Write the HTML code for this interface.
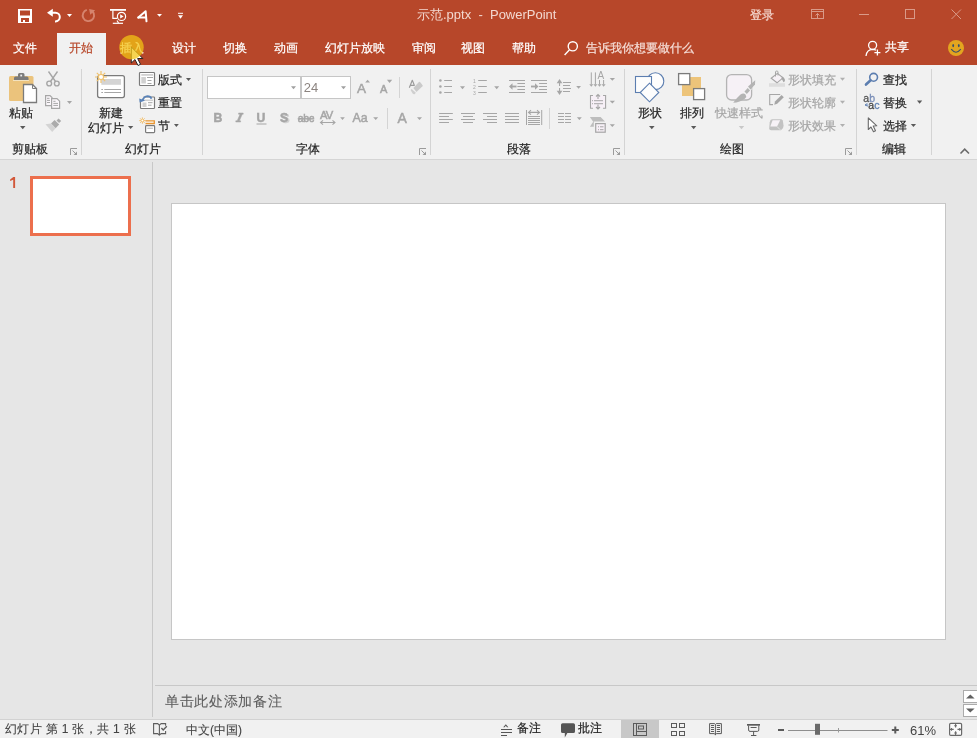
<!DOCTYPE html>
<html><head><meta charset="utf-8">
<style>
html,body{margin:0;padding:0;width:977px;height:738px;overflow:hidden;background:#E6E6E6;font-family:"Liberation Sans",sans-serif;}
.a{position:absolute;white-space:pre;font-size:12px;line-height:12px;-webkit-text-stroke-width:0.22px;will-change:transform;}
#bar{position:absolute;left:0;top:0;width:977px;height:65px;background:#B7472A;}
#tab{position:absolute;left:57px;top:33px;width:49px;height:32px;background:#F1F1F1;}
#rib{position:absolute;left:0;top:65px;width:977px;height:94px;background:#F1F1F1;border-bottom:1px solid #D5D5D5;}
#stat{position:absolute;left:0;top:719px;width:977px;height:19px;background:#F1F1F1;border-top:1px solid #D2D2D2;}
.w{color:#FFFFFF;}
.k{color:#262626;}
.g{color:#A6A6A6;}
.s{color:#444444;}
#ov{position:absolute;left:0;top:0;will-change:transform;}
</style></head><body>
<div id="bar"></div>
<div id="tab"></div>
<div id="rib"></div>
<div id="stat"></div>

<!-- title -->
<div class="a" style="left:417px;top:8px;font-size:13px;line-height:13px;color:#F3D8D0;-webkit-text-stroke-width:0;">示范.pptx  -  PowerPoint</div>
<div class="a" style="left:750px;top:9px;color:#F2D3CA;">登录</div>

<!-- tabs -->
<div class="a w" style="left:13px;top:42px;">文件</div>
<div class="a" style="left:69px;top:42px;color:#B7472A;">开始</div>
<div class="a" style="left:120px;top:42px;color:#FFFFFF;">插入</div>
<div class="a w" style="left:172px;top:42px;">设计</div>
<div class="a w" style="left:223px;top:42px;">切换</div>
<div class="a w" style="left:274px;top:42px;">动画</div>
<div class="a w" style="left:325px;top:42px;">幻灯片放映</div>
<div class="a w" style="left:412px;top:42px;">审阅</div>
<div class="a w" style="left:461px;top:42px;">视图</div>
<div class="a w" style="left:512px;top:42px;">帮助</div>
<div class="a" style="left:586px;top:42px;color:#F4DCD5;">告诉我你想要做什么</div>
<div class="a w" style="left:885px;top:41px;">共享</div>

<!-- ribbon text: clipboard -->
<div class="a k" style="left:9px;top:107px;">粘贴</div>
<div class="a k" style="left:12px;top:143px;">剪贴板</div>
<!-- slides -->
<div class="a k" style="left:99px;top:107px;">新建</div>
<div class="a k" style="left:88px;top:122px;">幻灯片</div>
<div class="a k" style="left:158px;top:74px;">版式</div>
<div class="a k" style="left:158px;top:97px;">重置</div>
<div class="a k" style="left:158px;top:120px;">节</div>
<div class="a k" style="left:125px;top:143px;">幻灯片</div>
<!-- font -->
<div class="a k" style="left:296px;top:143px;">字体</div>
<!-- paragraph -->
<div class="a k" style="left:507px;top:143px;">段落</div>
<!-- drawing -->
<div class="a k" style="left:638px;top:107px;">形状</div>
<div class="a k" style="left:680px;top:107px;">排列</div>
<div class="a g" style="left:715px;top:107px;">快速样式</div>
<div class="a g" style="left:788px;top:74px;">形状填充</div>
<div class="a g" style="left:788px;top:97px;">形状轮廓</div>
<div class="a g" style="left:788px;top:120px;">形状效果</div>
<div class="a k" style="left:720px;top:143px;">绘图</div>
<!-- editing -->
<div class="a k" style="left:883px;top:74px;">查找</div>
<div class="a k" style="left:883px;top:97px;">替换</div>
<div class="a k" style="left:883px;top:120px;">选择</div>
<div class="a k" style="left:882px;top:143px;">编辑</div>

<!-- main -->
<div style="position:absolute;left:152px;top:162px;width:1px;height:555px;background:#C8C8C8;"></div>
<div style="position:absolute;left:30px;top:176px;width:95px;height:54px;border:3px solid #EC6F4D;background:#fff;"></div>
<div style="position:absolute;left:171px;top:203px;width:773px;height:435px;border:1px solid #C6C6C6;background:#fff;"></div>
<div style="position:absolute;left:155px;top:685px;width:822px;height:1px;background:#C8C8C8;"></div>
<div class="a" style="left:164.5px;top:694px;font-size:14.4px;letter-spacing:0.65px;line-height:15px;color:#5E5E5E;-webkit-text-stroke-width:0.1px;">单击此处添加备注</div>

<!-- status -->
<div class="a s" style="left:4.5px;top:723px;letter-spacing:0.33px;-webkit-text-stroke-width:0.1px;">幻灯片 第 1 张，共 1 张</div>
<div class="a s" style="left:185.5px;top:724px;-webkit-text-stroke-width:0.1px;">中文(中国)</div>
<div class="a" style="left:517px;top:722px;color:#262626;">备注</div>
<div class="a" style="left:578px;top:722px;color:#262626;">批注</div>
<div style="position:absolute;left:621px;top:720px;width:38px;height:18px;background:#C8C8C8;"></div>
<div class="a s" style="left:910px;top:724px;font-size:13px;line-height:13px;-webkit-text-stroke-width:0;">61%</div>

<svg id="ov" width="977" height="738" viewBox="0 0 977 738">
<!-- ===== QAT ===== -->
<g fill="#fff">
 <rect x="18" y="9" width="14" height="14"/>
 <rect x="20" y="10.5" width="10" height="5" fill="#B7472A"/>
 <rect x="21" y="18" width="8" height="4" fill="#B7472A"/>
 <rect x="23" y="20" width="2" height="2"/>
</g>
<g fill="none" stroke="#fff" stroke-width="2">
 <path d="M51.5 12.8 H55.5 A4.3 4.3 0 0 1 55.5 21.4 H55"/>
</g>
<path d="M47 12.8 L52.8 8.8 V16.8 Z" fill="#fff"/>
<path d="M67 14 H72 L69.5 17 Z" fill="#fff"/>
<path d="M86.8 9.9 A5.7 5.7 0 1 0 92.6 11.5" fill="none" stroke="#D6846E" stroke-width="1.9"/>
<path d="M89.1 9.1 L95.1 10.2 L90.3 14.8 Z" fill="#D6846E"/>
<!-- presenter -->
<g fill="none" stroke="#fff" stroke-width="1.8">
 <path d="M110 9.9 H126"/>
</g>
<g fill="none" stroke="#fff" stroke-width="1.2">
 <path d="M112.9 10.5 V18.4 H117"/>
 <circle cx="121.5" cy="16.4" r="4.1"/>
 <path d="M112.8 23.3 H123"/>
</g>
<path d="M120.2 14.2 L123.6 16.4 L120.2 18.6 Z" fill="#fff"/>
<path d="M117 20.5 L118.5 23" stroke="#fff" stroke-width="1.2"/>
<!-- A italic -->
<g fill="none" stroke="#fff" stroke-width="2" stroke-linejoin="round" stroke-linecap="round">
 <path d="M138.3 17.6 L145.6 11.2 L146.5 21.3"/>
 <path d="M138.3 17.6 H145.8"/>
</g>
<path d="M157 14 H162 L159.5 16.8 Z" fill="#fff"/>
<rect x="178" y="12.8" width="5" height="1" fill="#fff"/>
<path d="M178 15.3 H183 L180.5 18.8 Z" fill="#fff"/>
<!-- window controls -->
<g fill="none" stroke="#D99A88" stroke-width="1">
 <rect x="811.5" y="9.5" width="12" height="9"/>
 <path d="M811.5 11.5 H823.5"/>
 <path d="M817.5 18 V13.5 M815.5 15.5 L817.5 13.5 L819.5 15.5"/>
 <path d="M859 14.5 H869"/>
 <rect x="905.5" y="9.5" width="9" height="9"/>
 <path d="M951.5 9.5 L961 19 M961 9.5 L951.5 19"/>
</g>
<!-- search -->
<g fill="none" stroke="#fff" stroke-width="1.4">
 <circle cx="572.8" cy="46.3" r="4.6"/>
 <path d="M569.5 49.8 L564.6 55"/>
</g>
<!-- user -->
<g fill="none" stroke="#fff" stroke-width="1.3">
 <circle cx="872.6" cy="45.3" r="4"/>
 <path d="M866 56 C866.5 51.5 869 49.5 872.6 49.4 C874 49.4 875 49.7 876 50.2"/>
 <path d="M877.4 49.6 V55.6 M874.4 52.6 H880.4"/>
</g>
<!-- smiley -->
<circle cx="956" cy="48" r="8" fill="#E3A51F"/>
<ellipse cx="953.2" cy="45.6" rx="0.9" ry="1.7" fill="#3A4E6A"/>
<ellipse cx="958.8" cy="45.6" rx="0.9" ry="1.7" fill="#3A4E6A"/>
<path d="M951.2 49.2 Q956 55.2 960.8 49.2" fill="none" stroke="#3A4E6A" stroke-width="1.1"/>
<!-- highlight circle + cursor -->


<!-- cursor -->
<path d="M131.3 47 V63 L135 59.5 L138 65.5 L140.5 64.3 L137.6 58.5 L142.8 58.5 Z" fill="#FFFFFF" stroke="#1A1A1A" stroke-width="0.9" stroke-linejoin="miter"/>
<circle cx="131.5" cy="47.2" r="12.2" fill="rgb(243,195,20)" fill-opacity="0.74"/>

<!-- ===== Clipboard group ===== -->
<rect x="9" y="76" width="24.5" height="25" rx="1.5" fill="#EBC37C"/>
<path d="M14 80 V78 Q14 76.5 15.5 76.5 H18 V74.5 Q18 73 19.5 73 H23 Q24.5 73 24.5 74.5 V76.5 H27 Q28.5 76.5 28.5 78 V80 Z" fill="#7B7B7B"/>
<rect x="20.3" y="74.6" width="1.8" height="1.8" fill="#F2F2F2"/>
<rect x="13" y="80" width="16" height="1" fill="#F2E2C0"/>
<path d="M23.5 84.5 H32.5 L36.5 88.5 V102.5 H23.5 Z" fill="#FFFFFF" stroke="#7B7B7B" stroke-width="1.3"/>
<path d="M32.5 84.5 V88.5 H36.5" fill="none" stroke="#7B7B7B" stroke-width="1"/>
<path d="M20 126 H25.5 L22.75 129.2 Z" fill="#5A5A5A"/>
<!-- scissors -->
<g fill="none" stroke="#A6A6A6" stroke-width="1.4">
 <path d="M48.5 71.5 L55.5 81.5 M57.5 71.5 L50.5 81.5"/>
 <circle cx="49.2" cy="83.5" r="2.4"/>
 <circle cx="56.8" cy="83.5" r="2.4"/>
</g>
<!-- copy -->
<g stroke="#A6A6A6" stroke-width="1.2" fill="#FBF7FB">
 <path d="M45.6 95.6 H50 L52 97.6 V105.6 H45.6 Z"/>
 <path d="M51.6 98.6 H57 L59.6 101.2 V108.4 H51.6 Z"/>
</g>
<g stroke="#A6A6A6" stroke-width="1">
 <path d="M47 98.3 H49.5 M47 100.4 H50 M47 102.5 H50"/>
 <path d="M53.3 101.3 H55.5 M53.3 103.4 H58 M53.3 105.4 H58"/>
</g>
<path d="M67 101 H72 L69.5 104 Z" fill="#A6A6A6"/>
<!-- format painter -->
<path d="M56.5 120.5 L58.6 118.4 L61.2 121 L59.1 123.1 Z" fill="#ABABAB"/>
<path d="M51 123.6 L54.6 120 L59.2 124.6 L55.6 128.2 Z" fill="#ABABAB"/>
<path d="M45.5 124.3 L51 123.6 L55.6 128.2 L52.2 132 Z" fill="#D4D4D4"/>
<!-- launcher -->
<g fill="none" stroke="#9B9B9B" stroke-width="1">
 <path d="M70.5 155 V148.5 H77"/>
 <path d="M72.5 150.5 L76 154"/>
</g>
<path d="M73.5 155 H77 V151.5 Z" fill="#9B9B9B"/>

<!-- separators -->
<g fill="#D4D4D4">
 <rect x="81" y="69" width="1" height="86"/>
 <rect x="202" y="69" width="1" height="86"/>
 <rect x="430" y="69" width="1" height="86"/>
 <rect x="624" y="69" width="1" height="86"/>
 <rect x="856" y="69" width="1" height="86"/>
 <rect x="931" y="69" width="1" height="86"/>
 <rect x="399" y="77" width="1" height="21"/>
 <rect x="387" y="108" width="1" height="21"/>
 <rect x="549" y="108" width="1" height="21"/>
</g>

<!-- ===== Slides group ===== -->
<rect x="97.6" y="75.6" width="26.8" height="22" rx="2" fill="#FFFFFF" stroke="#7B7B7B" stroke-width="1.3"/>
<rect x="101.3" y="79" width="19.7" height="5.8" fill="#D4D4D4"/>
<g stroke="#A6A6A6" stroke-width="1">
 <path d="M101.3 89.5 H103 M104.3 89.5 H121 M101.3 92.5 H103 M104.3 92.5 H121"/>
</g>
<g stroke="#F0C26C" stroke-width="1.2">
 <path d="M101 71 V83 M95 77 H107 M96.8 72.8 L105.2 81.2 M105.2 72.8 L96.8 81.2"/>
</g>
<circle cx="101" cy="77" r="3" fill="#F0C26C"/>
<circle cx="101" cy="77" r="2" fill="#FFFFFF"/>
<path d="M128 126 H133.3 L130.65 129 Z" fill="#5A5A5A"/>
<!-- layout -->
<rect x="139.5" y="72.5" width="15" height="13" rx="0.8" fill="#FFFFFF" stroke="#7B7B7B" stroke-width="1.2"/>
<rect x="141.3" y="74" width="11.7" height="1.8" fill="#D0D0D0"/>
<rect x="141.3" y="77" width="4.6" height="6.5" fill="#D0D0D0"/>
<g stroke="#A6A6A6" stroke-width="1"><path d="M147 77.5 H153 M147.5 80.5 H151.5 M147.5 83.5 H151.5"/></g>
<path d="M186 78 H191 L188.5 81 Z" fill="#5A5A5A"/>
<!-- reset -->
<rect x="140.5" y="97" width="14" height="11.5" rx="0.8" fill="#FFFFFF" stroke="#7B7B7B" stroke-width="1.2"/>
<rect x="142.5" y="99.5" width="10.5" height="1.6" fill="#D0D0D0"/>
<rect x="142.5" y="102.5" width="4" height="4.5" fill="#D0D0D0"/>
<g stroke="#A6A6A6" stroke-width="1"><path d="M148 102.7 H152.5 M148 105.2 H151.5"/></g>
<path d="M138.5 95.5 H143.5 V101.5 H138.5 Z" fill="#F1F1F1"/>
<path d="M142.2 100.8 Q144 96.3 147.5 96.1 Q150.5 96.1 151.5 98.8" fill="none" stroke="#5A83B8" stroke-width="1.8"/>
<path d="M139.2 98.4 L145.2 100.4 L139.6 102.6 Z" fill="#5A83B8"/>
<!-- section -->
<g stroke="#F2BE6A" stroke-width="0.9"><path d="M142.4 117.4 V123.8 M139.2 120.6 H145.6 M140.1 118.3 L144.7 122.9 M144.7 118.3 L140.1 122.9"/></g>
<circle cx="142.4" cy="120.6" r="1.8" fill="#F2BE6A"/>
<circle cx="142.4" cy="120.6" r="1" fill="#FFF"/>
<path d="M145.5 120.9 H154.3 V123.5 H145.5" fill="#FFFFFF" stroke="#E89530" stroke-width="1.3"/>
<rect x="145.6" y="125.6" width="9" height="7" rx="0.8" fill="#FFFFFF" stroke="#7B7B7B" stroke-width="1.2"/>
<rect x="147.3" y="127.6" width="5.6" height="1.4" fill="#C8C8C8"/>
<path d="M174 124 H178.8 L176.4 127 Z" fill="#5A5A5A"/>

<!-- ===== Font group ===== -->
<rect x="207.5" y="76.5" width="93" height="22" fill="#FFFFFF" stroke="#C6C6C6" stroke-width="1"/>
<rect x="301.5" y="76.5" width="49" height="22" fill="#FFFFFF" stroke="#C6C6C6" stroke-width="1"/>
<rect x="300" y="77" width="2" height="21" fill="#C6C6C6"/>
<path d="M291 86.3 H296 L293.5 89.3 Z" fill="#A0A0A0"/>
<text x="303.8" y="91.8" font-size="13" fill="#8C8480" font-family="Liberation Sans">24</text>
<path d="M341 86.3 H346 L343.5 89.3 Z" fill="#A0A0A0"/>
<g fill="#A6A6A6" stroke="#A6A6A6" stroke-width="0.5" font-family="Liberation Sans">
 <text x="357" y="93" font-size="13.5">A</text>
 <text x="380" y="93" font-size="11">A</text>
</g>
<path d="M365.2 82.6 L367.6 79.8 L370 82.6 Z" fill="#A6A6A6"/>
<path d="M386.9 79.8 H392.2 L389.55 83 Z" fill="#A6A6A6"/>
<!-- clear formatting -->
<path d="M409.3 87.8 L412.3 80.3 L414.5 85.6 M410.3 85.4 H414.5" fill="none" stroke="#9A9A9A" stroke-width="1.15" stroke-linejoin="round"/>
<path d="M413.4 87.9 L418.9 82.1 Q419.5 81.6 420 82.1 L422.6 85.2 Q423 85.8 422.5 86.3 L417 91.6 Q416.5 92 416 91.5 Z" fill="#CACACA"/>
<path d="M410.6 89.9 L411.6 88.9 L415.9 92.8 L414.6 94.2 Q413.6 94.6 412.6 93.6 Z" fill="#CFCFCF"/>
<!-- B I U S -->
<g fill="#A6A6A6" stroke="#A6A6A6" stroke-width="0.5">
 <text x="213.5" y="122" font-size="12.2" font-weight="bold" font-family="Liberation Sans">B</text>
 <path d="M238.6 113 H243.2 V114.3 H242.2 L239.4 120.8 H240.6 V122 H235.8 V120.8 H237.2 L240 114.3 H238.6 Z"/>
 <text x="256.6" y="122" font-size="12.2" font-weight="bold" font-family="Liberation Sans">U</text>
 <rect x="256.5" y="123.5" width="10" height="1" stroke="none"/>
 <text x="281.5" y="123.3" font-size="12.2" font-weight="bold" font-family="Liberation Sans" fill="#CFCFCF" stroke="#CFCFCF">S</text>
 <text x="280" y="122" font-size="12.2" font-weight="bold" font-family="Liberation Sans">S</text>
 <text x="297.8" y="122" font-size="10.5" font-family="Liberation Sans" letter-spacing="-0.3">abc</text>
 <rect x="298" y="118.2" width="16" height="1"/>
 <text x="320" y="119" font-size="11.2" font-family="Liberation Sans" letter-spacing="-0.9">AV</text>
 <text x="352.6" y="122" font-size="12.4" font-family="Liberation Sans">Aa</text>
 <text x="397.4" y="122.8" font-size="14" font-family="Liberation Sans">A</text>
</g>
<g fill="none" stroke="#A6A6A6" stroke-width="1.1">
 <path d="M320.5 122.5 H335 M323 120.3 L320.5 122.5 L323 124.7 M332.5 120.3 L335 122.5 L332.5 124.7"/>
</g>
<g fill="#A6A6A6">
 <path d="M340.2 117.2 H344.8 L342.5 120 Z"/>
 <path d="M373.2 117.2 H378.2 L375.7 120 Z"/>
 <path d="M417 117.2 H422 L419.5 120 Z"/>
</g>
<!-- launcher font -->
<g fill="none" stroke="#9B9B9B" stroke-width="1">
 <path d="M419.5 155 V148.5 H426"/>
 <path d="M421.5 150.5 L425 154"/>
</g>
<path d="M422.5 155 H426 V151.5 Z" fill="#9B9B9B"/>

<!-- ===== Paragraph group ===== -->
<g fill="#A6A6A6">
 <circle cx="440.4" cy="80.5" r="1.3"/><circle cx="440.4" cy="86.5" r="1.3"/><circle cx="440.4" cy="92.5" r="1.3"/>
 <rect x="444.2" y="80" width="7.8" height="1"/><rect x="444.2" y="86" width="7.8" height="1"/><rect x="444.2" y="92" width="7.8" height="1"/>
 <path d="M460 86.2 H465 L462.5 89.2 Z"/>
 <rect x="478.2" y="80" width="8.6" height="1"/><rect x="478.2" y="86" width="8.6" height="1"/><rect x="478.2" y="92" width="8.6" height="1"/>
 <path d="M494.2 86.2 H499.2 L496.7 89.2 Z"/>
</g>
<g fill="#A6A6A6" font-family="Liberation Sans" font-size="5">
 <text x="473" y="83">1</text><text x="473" y="89">2</text><text x="473" y="95">3</text>
</g>
<g fill="#A6A6A6">
 <rect x="509" y="80" width="16" height="1"/><rect x="509" y="92" width="16" height="1"/>
 <rect x="517.4" y="83" width="7.6" height="1"/><rect x="517.4" y="86" width="7.6" height="1"/><rect x="517.4" y="89" width="7.6" height="1"/>
 <rect x="511" y="85.6" width="5.5" height="1.8"/>
 <path d="M509 86.5 L512.5 83.2 V89.8 Z"/>
 <rect x="531" y="80" width="16" height="1"/><rect x="531" y="92" width="16" height="1"/>
 <rect x="539.1" y="83" width="7.9" height="1"/><rect x="539.1" y="86" width="7.9" height="1"/><rect x="539.1" y="89" width="7.9" height="1"/>
 <rect x="531" y="85.6" width="5.5" height="1.8"/>
 <path d="M538.5 86.5 L535 83.2 V89.8 Z"/>
 <!-- line spacing -->
 <rect x="559" y="82" width="1.1" height="4"/><rect x="559" y="88" width="1.1" height="4"/>
 <path d="M559.55 79 L562.4 83.2 H556.7 Z"/><path d="M559.55 95 L562.4 90.8 H556.7 Z"/>
 <rect x="563" y="82" width="8" height="1"/><rect x="563" y="85" width="7" height="1"/><rect x="563" y="88" width="8" height="1"/><rect x="563" y="91" width="7" height="1"/>
 <path d="M576.2 85.9 H581 L578.6 88.8 Z"/>
 <!-- text direction -->
 <rect x="590.8" y="72.4" width="1" height="12"/><rect x="594.9" y="72.4" width="1" height="12"/>
 <rect x="599" y="80" width="1" height="4.5"/><rect x="603.1" y="80" width="1" height="4.5"/>
 <path d="M591.3 86.8 L589.3 84.2 H593.3 Z"/><path d="M595.4 86.8 L593.4 84.2 H597.4 Z"/>
 <path d="M599.5 86.8 L597.5 84.2 H601.5 Z"/><path d="M603.6 86.8 L601.6 84.2 H605.6 Z"/>
 <path d="M609.7 78 H615 L612.35 80.8 Z"/>
 <path d="M609.7 100.8 H615 L612.35 103.6 Z"/>
 <path d="M609.7 124.3 H614.9 L612.3 127 Z"/>
</g>
<text x="597.5" y="79" font-size="10" fill="#A6A6A6" font-family="Liberation Sans">A</text>
<!-- align text -->
<rect x="590.5" y="95.5" width="15" height="12.5" fill="#F7F0F7"/>
<g fill="none" stroke="#A6A6A6" stroke-width="1.1">
 <path d="M593 95.5 H590.5 V108.2 H593 M603 95.5 H605.6 V108.2 H603"/>
 <path d="M598 94.5 V99 M596 96.5 L598 94.5 L600 96.5 M598 104.5 V109 M596 107 L598 109 L600 107"/>
</g>
<g fill="#A6A6A6"><rect x="594" y="100.2" width="9" height="1"/><rect x="594" y="103.2" width="9" height="1"/><rect x="592" y="100.2" width="1" height="1"/><rect x="592" y="103.2" width="1" height="1"/></g>
<!-- align row -->
<g fill="#A6A6A6">
 <rect x="439.1" y="113" width="13.7" height="1"/><rect x="439.1" y="116" width="9.9" height="1"/><rect x="439.1" y="119" width="13.7" height="1"/><rect x="439.1" y="122" width="9.9" height="1"/>
 <rect x="461" y="113" width="14" height="1"/><rect x="463" y="116" width="10" height="1"/><rect x="461" y="119" width="14" height="1"/><rect x="463" y="122" width="10" height="1"/>
 <rect x="483" y="113" width="14" height="1"/><rect x="487" y="116" width="10" height="1"/><rect x="483" y="119" width="14" height="1"/><rect x="487" y="122" width="10" height="1"/>
 <rect x="505" y="113" width="14" height="1"/><rect x="505" y="116" width="14" height="1"/><rect x="505" y="119" width="14" height="1"/><rect x="505" y="122" width="14" height="1"/>
 <rect x="526" y="110" width="1" height="15"/><rect x="541.2" y="110" width="1" height="15"/>
 <rect x="528" y="116" width="12" height="1"/><rect x="528" y="118" width="12" height="1"/><rect x="528" y="120" width="12" height="1"/><rect x="528" y="122" width="12" height="1"/><rect x="528" y="124" width="12" height="1"/>
 <rect x="558" y="113" width="6" height="1"/><rect x="558" y="116" width="6" height="1"/><rect x="558" y="119" width="6" height="1"/><rect x="558" y="122" width="6" height="1"/>
 <rect x="565" y="113" width="6" height="1"/><rect x="565" y="116" width="6" height="1"/><rect x="565" y="119" width="6" height="1"/><rect x="565" y="122" width="6" height="1"/>
 <path d="M576.9 117.2 H581.8 L579.35 120 Z"/>
</g>
<g fill="none" stroke="#A6A6A6" stroke-width="1.1">
 <path d="M528.5 112.4 H539.5 M531 110.2 L528.5 112.4 L531 114.6 M537 110.2 L539.5 112.4 L537 114.6"/>
</g>
<!-- smartart -->
<path d="M589.9 117 H600.6 L605 121.6 H593.8 V126.8 H589.9 L593.2 121.8 Z" fill="#BDBDBD"/>
<rect x="595.7" y="123.6" width="9.5" height="8.6" fill="#F7F0F7" stroke="#A6A6A6" stroke-width="1.2"/>
<g fill="#A6A6A6"><rect x="598" y="126.3" width="1" height="1"/><rect x="600" y="126.3" width="3.5" height="1"/><rect x="598" y="129.2" width="1" height="1"/><rect x="600" y="129.2" width="3.5" height="1"/></g>
<!-- launcher para -->
<g fill="none" stroke="#9B9B9B" stroke-width="1">
 <path d="M613.5 155 V148.5 H620"/>
 <path d="M615.5 150.5 L619 154"/>
</g>
<path d="M616.5 155 H620 V151.5 Z" fill="#9B9B9B"/>

<!-- ===== Drawing group ===== -->
<circle cx="655.4" cy="81.2" r="8.4" fill="#FDFDFD" stroke="#5C7EB0" stroke-width="1.1"/>
<rect x="635.5" y="76.5" width="16" height="16" fill="#FDFDFD" stroke="#5C7EB0" stroke-width="1.1"/>
<path d="M649.5 83.2 L658.8 92.5 L649.5 101.8 L640.2 92.5 Z" fill="#FDFDFD" stroke="#5C7EB0" stroke-width="1.1"/>
<path d="M649 125.9 H654.6 L651.8 129.2 Z" fill="#5A5A5A"/>
<!-- arrange -->
<rect x="682" y="77" width="19" height="19" fill="#EDC47A"/>
<rect x="678.6" y="73.6" width="11.2" height="11" fill="#FFFFFF" stroke="#7B7B7B" stroke-width="1.3"/>
<rect x="693.6" y="88.6" width="11" height="11" fill="#FFFFFF" stroke="#7B7B7B" stroke-width="1.3"/>
<path d="M691 125.9 H696.3 L693.65 129.2 Z" fill="#5A5A5A"/>
<!-- quick styles -->
<rect x="726.6" y="74.6" width="25" height="25.4" rx="5" fill="#F6F1F6" stroke="#B4B4B4" stroke-width="1.3"/>
<path d="M743 92 L749 86 L752 89 L746.5 95 Z" fill="#F2F2F2"/>
<path d="M748 86.5 L755.2 80.2 L755 84.5 L750.5 89.5 Z" fill="#B4B4B4"/>
<path d="M744.5 91.5 L747.7 88 L750 90.5 L746.8 94 Z" fill="#B4B4B4"/>
<path d="M733.2 102.8 Q737 97.5 740.5 94.5 Q743.5 92.5 745.5 94.5 Q747 96.5 745 98.5 Q740 102.5 733.2 102.8 Z" fill="#B4B4B4"/>
<path d="M738.8 125.9 H744.2 L741.5 129.2 Z" fill="#C8C8C8"/>
<!-- shape fill -->
<rect x="769" y="83.2" width="16" height="3.6" fill="#DEDEDE"/>
<path d="M771.2 78.3 L777.4 73.4 L783 77.8 L777 82.8 Z" fill="#F6F1F6" stroke="#A6A6A6" stroke-width="1.1"/>
<path d="M775.5 76.5 V72 Q775.5 71 776.8 71 Q778 71 778 72 V75.5" fill="none" stroke="#A6A6A6" stroke-width="1"/>
<path d="M782 76.5 Q785 78 785 80 Q785 82 783.5 82.2 Q782.5 80 781.5 78.5 Z" fill="#A6A6A6"/>
<path d="M840 77.7 H845 L842.5 80.8 Z" fill="#B0B0B0"/>
<!-- shape outline -->
<path d="M780.2 94.5 H769.7 V104.6 H773" fill="none" stroke="#A6A6A6" stroke-width="1.1"/>
<path d="M774.3 104.7 L775 101.6 L781.6 95 L783.8 97.2 L777.2 103.8 Z" fill="#A6A6A6"/>
<path d="M840 100.7 H845 L842.5 103.8 Z" fill="#B0B0B0"/>
<!-- shape effects -->
<path d="M772 119.2 H780.6 Q782 119.2 782.8 120.6 L783.5 125.2 Q783.7 127 782.6 128.4 L781 130.2 H771.2 Q769.1 130.2 769.2 128.2 L769.7 122.2 Q770.2 119.2 772 119.2 Z" fill="#C2C2C2"/>
<path d="M772.6 120.3 H780.2 L777.1 126.5 H770.3 Z" fill="#F7F2F7"/>
<path d="M777.1 126.6 L780.3 129.8" stroke="#EDEDED" stroke-width="0.8"/>
<path d="M840 124 H845 L842.5 127 Z" fill="#B0B0B0"/>
<!-- launcher drawing -->
<g fill="none" stroke="#9B9B9B" stroke-width="1">
 <path d="M845.5 155 V148.5 H852"/>
 <path d="M847.5 150.5 L851 154"/>
</g>
<path d="M848.5 155 H852 V151.5 Z" fill="#9B9B9B"/>

<!-- ===== Editing ===== -->
<circle cx="873.6" cy="77.3" r="3.9" fill="none" stroke="#5C7EB0" stroke-width="1.6"/>
<path d="M870.6 80.3 L866 84.5" stroke="#5C7EB0" stroke-width="2.6" stroke-linecap="round"/>
<g font-family="Liberation Sans" font-size="10.5">
 <text x="863.3" y="101.8" fill="#555555" stroke="#555555" stroke-width="0.3">a</text>
 <text x="869.2" y="101.8" fill="#7B8FB8" stroke="#7B8FB8" stroke-width="0.3">b</text>
 <text x="868.2" y="108.8" fill="#444444" stroke="#444444" stroke-width="0.3">a</text>
 <text x="874.2" y="108.8" fill="#5C7EB0" stroke="#5C7EB0" stroke-width="0.3">c</text>
</g>
<path d="M867.5 103.3 L865 105 L867.8 106.2 M865.2 105 H868.5" fill="none" stroke="#5C7EB0" stroke-width="0.9"/>
<path d="M917 100.6 H922.2 L919.6 103.8 Z" fill="#5A5A5A"/>
<path d="M868.3 117.8 V129.5 L871 127 L873.5 131.8 L875.5 130.8 L873.2 126 L876.8 125.8 Z" fill="#FFFFFF" stroke="#6A6A6A" stroke-width="1.1" stroke-linejoin="round"/>
<path d="M910.8 124 H916.1 L913.45 127.1 Z" fill="#5A5A5A"/>
<path d="M960.5 153.5 L964.7 149.2 L969 153.5" fill="none" stroke="#6A6A6A" stroke-width="1.6"/>

<!-- ===== Main area ===== -->
<g fill="#FFFFFF" stroke="#ABABAB" stroke-width="1">
 <rect x="963.5" y="690.5" width="14" height="12"/>
 <rect x="963.5" y="704.5" width="14" height="12"/>
</g>
<path d="M966 698.5 L970.3 694.5 L974.6 698.5 Z" fill="#606060"/>
<path d="M966 708.5 H974.6 L970.3 712.5 Z" fill="#606060"/>

<!-- ===== Status ===== -->
<g fill="none" stroke="#5E5E5E" stroke-width="1.1">
 <path d="M159.4 725 L157.6 723.6 H153.6 V733.6 H157.6 L159.4 735"/>
 <path d="M159.4 725 L161.2 723.6 H165.6 V725.8"/>
 <path d="M165.6 731 V733.6 H161.2 L159.4 735"/>
 <path d="M159.4 725 V735.6"/>
</g>
<path d="M161.4 728 L163.2 730 L166.8 726.2" fill="none" stroke="#5E5E5E" stroke-width="1.4"/>
<g fill="#555555">
 <path d="M503.2 727.2 L505.8 724.2 L508.4 727.2 H507 L505.8 725.8 L504.6 727.2 Z"/>
 <rect x="501" y="729" width="11" height="1"/><rect x="501" y="732" width="11" height="1"/><rect x="501" y="735" width="6" height="1"/>
 <path d="M562.6 723.2 H573.4 Q575 723.2 575 724.8 V731.4 Q575 733 573.4 733 H567.4 L564.8 737.6 V733 H562.6 Q561 733 561 731.4 V724.8 Q561 723.2 562.6 723.2 Z"/>
</g>
<g fill="none" stroke="#5A5A5A" stroke-width="1">
 <rect x="633.5" y="723.5" width="13" height="12"/>
 <path d="M636.5 724 V735 M636.5 731.5 H646"/>
 <rect x="638.5" y="726" width="5" height="3"/>
 <rect x="671.5" y="723.5" width="5" height="4"/><rect x="679.5" y="723.5" width="5" height="4"/>
 <rect x="671.5" y="731.5" width="5" height="4"/><rect x="679.5" y="731.5" width="5" height="4"/>
 <path d="M709.6 723.6 H714.6 L715.4 724.4 L716.2 723.6 H721.4 V733.6 H716.4 L715.4 734.8 L714.4 733.6 H709.6 Z"/>
 <path d="M715.4 724.4 V735.2"/>
 <path d="M711 725.5 H714 M711 727.5 H714 M711 729.5 H714 M711 731.5 H714 M716.8 725.5 H720 M716.8 727.5 H720 M716.8 729.5 H720 M716.8 731.5 H720"/>
 <path d="M748.6 725.5 V730 Q748.6 731.4 750 731.4 H757.4 Q758.8 731.4 758.8 730 V725.5"/>
 <path d="M750.6 727.5 H756.6 M753.6 731.5 V735.5 M751 735.5 H756.4"/>
</g>
<rect x="747" y="724" width="13" height="1.7" fill="#5A5A5A"/>
<g fill="#5A5A5A">
 <rect x="778" y="729" width="6" height="2"/>
 <rect x="788" y="730" width="99.5" height="1" fill="#8E8E8E"/>
 <rect x="838" y="728" width="1" height="4.5" fill="#9A9A9A"/>
 <rect x="815" y="723.8" width="5" height="11" fill="#6A6A6A"/>
 <rect x="891.8" y="729" width="7" height="2"/>
 <rect x="894.3" y="726.5" width="2" height="7"/>
</g>
<rect x="949.6" y="723.4" width="12" height="12" rx="1.2" fill="#FAFAFA" stroke="#6A6A6A" stroke-width="1.2"/>
<g stroke="#6A6A6A" stroke-width="1.1" fill="none">
 <path d="M955.6 723.5 V727.5 M954.2 725.8 H957 M955.6 735.3 V731.3 M954.2 733 H957 M949.7 729.4 H953.7 M951.5 728 V730.8 M961.5 729.4 H957.5 M959.7 728 V730.8"/>
</g>
<path d="M13.3 177.1 H15.1 V188 H13.2 V179.8 L10.1 180.9 V179.6 Z" fill="#D2583A"/>
</svg>
</body></html>
